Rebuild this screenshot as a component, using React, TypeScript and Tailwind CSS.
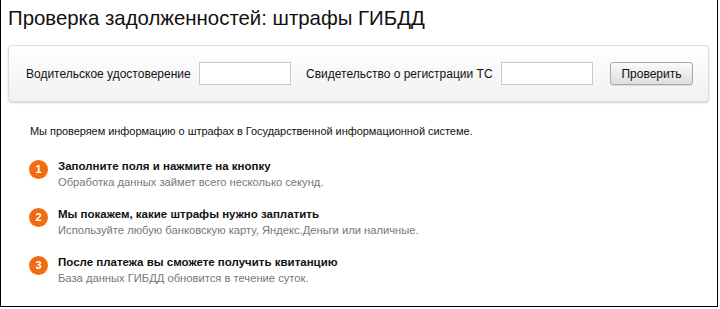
import React from "react";

const steps = [
  { n: "1", t: "Заполните поля и нажмите на кнопку", s: "Обработка данных займет всего несколько секунд." },
  { n: "2", t: "Мы покажем, какие штрафы нужно заплатить", s: "Используйте любую банковскую карту, Яндекс.Деньги или наличные." },
  { n: "3", t: "После платежа вы сможете получить квитанцию", s: "База данных ГИБДД обновится в течение суток." },
];

export default function App() {
  return (
    <div className="w-[720px] h-[309px] bg-white" style={{ fontFamily: '"Liberation Sans", Arial, sans-serif' }}>
      <div className="w-[718px] h-[307px] border-l border-r border-b border-black flex flex-col">
        <h1 className="text-[20.4px] leading-[24px] text-[#111] pl-[7px] pt-[6px] whitespace-nowrap">Проверка задолженностей: штрафы ГИБДД</h1>
        <div className="ml-[7px] mr-[8px] mt-[15px] h-[57px] rounded-[4px] border border-[#dcdcdc] bg-gradient-to-b from-white to-[#f1f1f1] shadow-[0_1px_2px_rgba(0,0,0,0.2)] flex items-center pl-[17px] text-[12px] text-[#111] whitespace-nowrap">
          <span className="w-[168px]">Водительское удостоверение</span>
          <input className="ml-[5px] w-[92px] h-[23px] border border-[#c8c8c8] bg-white outline-none" />
          <span className="ml-[15px] w-[190px]">Свидетельство о регистрации ТС</span>
          <input className="ml-[5px] w-[92px] h-[23px] border border-[#c8c8c8] bg-white outline-none" />
          <button className="ml-[17px] w-[83px] h-[23px] rounded-[3px] border border-[#a9a9a9] bg-gradient-to-b from-[#fafafa] to-[#dedede] text-[12px] text-[#111] shadow-[0_1px_1px_rgba(0,0,0,0.1)]">Проверить</button>
        </div>
        <p className="pl-[29px] mt-[21px] text-[11px] leading-[16px] tracking-[-0.05px] text-[#111] whitespace-nowrap">Мы проверяем информацию о штрафах в Государственной информационной системе.</p>
        <div className="flex flex-col gap-[16px] mt-[19px] pl-[28px]">
          {steps.map((st) => (
            <div key={st.n} className="flex items-start">
              <div className="mt-[2px] w-[19px] h-[19px] rounded-full bg-[#f26b0f] text-white text-[11px] font-bold flex items-center justify-center">{st.n}</div>
              <div className="ml-[10px] flex flex-col whitespace-nowrap">
                <span className="text-[11.5px] leading-[16px] font-bold text-[#111]">{st.t}</span>
                <span className="text-[11.2px] leading-[16px] text-[#777]">{st.s}</span>
              </div>
            </div>
          ))}
        </div>
      </div>
    </div>
  );
}
